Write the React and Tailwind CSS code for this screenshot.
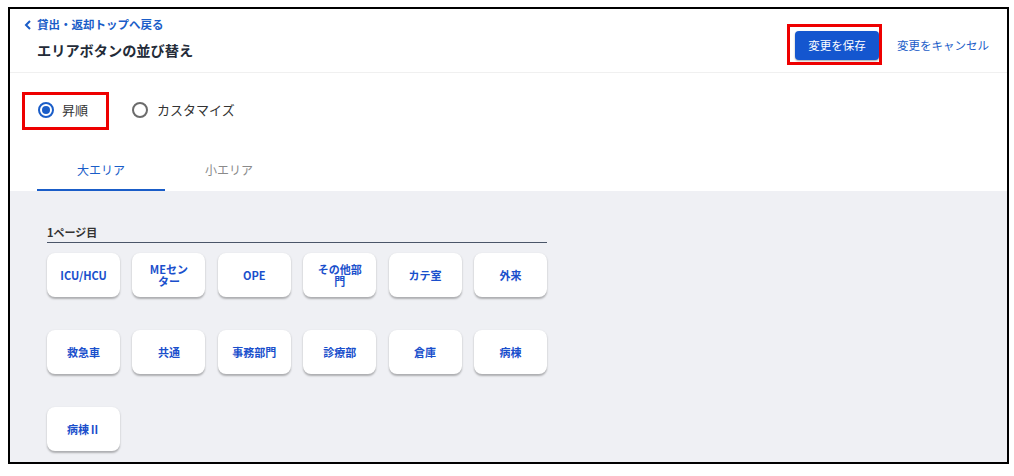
import React from "react";

const rows = [
  ["ICU/HCU", ["MEセン", "ター"], "OPE", ["その他部", "門"], "カテ室", "外来"],
  ["救急車", "共通", "事務部門", "診療部", "倉庫", "病棟"],
  ["病棟Ⅱ"],
];

function AreaButton({ label }) {
  return (
    <div className="h-[44px] w-[73px] rounded-[8px] bg-white shadow-[0_1.5px_2px_rgba(0,0,0,0.28)] flex items-center justify-center text-center text-[11px] font-bold leading-[12.5px] text-[#1a4fcc]">
      {Array.isArray(label) ? (
        <span>
          {label[0]}
          <br />
          {label[1]}
        </span>
      ) : (
        <span className="whitespace-nowrap">{label}</span>
      )}
    </div>
  );
}

export default function App() {
  const items = rows.flat();
  return (
    <div
      className="w-[1014px] h-[476px] bg-white pl-[8px] pt-[7px]"
      style={{ fontFamily: '"Noto Sans CJK JP", "Noto Sans", sans-serif' }}
    >
      <div className="w-[1001px] h-[457px] border-2 border-black flex flex-col overflow-hidden">
        {/* Header */}
        <div className="h-[64px] shrink-0 flex justify-between border-b border-[#f0f0f0]">
          <div className="pl-[14px] pt-[8px]">
            <div className="flex items-center h-[16px] text-[11.5px] font-bold text-[#1a5dc8]">
              <svg width="8" height="10" viewBox="0 0 8 10" className="mr-[5px]">
                <polyline points="6,1 2,5 6,9" fill="none" stroke="#1a5dc8" strokeWidth="2" />
              </svg>
              <span>貸出・返却トップへ戻る</span>
            </div>
            <div className="mt-[8px] ml-[13px] h-[20px] flex items-center text-[14.2px] font-bold text-[#232b38]">
              エリアボタンの並び替え
            </div>
          </div>
          <div className="flex items-start pt-[22px] pr-[18px]">
            <div className="relative">
              <button className="w-[84px] h-[29px] rounded-[4px] bg-[#1456cf] text-white text-[11.5px] shadow-[0_1px_2px_rgba(0,0,0,0.35)] flex items-center justify-center">
                変更を保存
              </button>
              <div className="absolute left-[-8px] top-[-7px] w-[95px] h-[41px] border-[3px] border-[#ee0000]" />
            </div>
            <div className="ml-[18px] h-[29px] flex items-center text-[11.5px] text-[#1a5dc8]">
              変更をキャンセル
            </div>
          </div>
        </div>

        {/* Radio row */}
        <div className="pl-[28px] pt-[27px] flex items-center">
          <div className="relative flex items-center h-[20px]">
            <span className="w-[16px] h-[16px] rounded-full border-2 border-[#1a5dc8] flex items-center justify-center">
              <span className="w-[8px] h-[8px] rounded-full bg-[#1a5dc8]" />
            </span>
            <span className="ml-[8px] text-[13px] text-[#333]">昇順</span>
            <div className="absolute left-[-16px] top-[-8px] w-[87px] h-[38px] border-[3px] border-[#ee0000]" />
          </div>
          <div className="ml-[44px] flex items-center h-[20px]">
            <span className="w-[16px] h-[16px] rounded-full border-2 border-[#6b6b6b]" />
            <span className="ml-[9px] text-[13px] text-[#333]">カスタマイズ</span>
          </div>
        </div>

        {/* Tabs */}
        <div className="pl-[27px] mt-[31px] flex">
          <div className="w-[128px] h-[40px] border-b-2 border-[#1a5dc8] flex items-center justify-center text-[12px] text-[#1a5dc8]">
            大エリア
          </div>
          <div className="w-[128px] h-[40px] border-b-2 border-transparent flex items-center justify-center text-[12px] text-[#8a8a8a]">
            小エリア
          </div>
        </div>

        {/* Gray area */}
        <div className="flex-1 bg-[#eff0f4] pl-[37px] pt-[33px]">
          <div className="w-[500px] pb-[2px] border-b border-[#4a5568] h-[19px] text-[11px] font-bold leading-[16px] text-[#333]">
            1ページ目
          </div>
          <div className="mt-[10px] grid grid-cols-[repeat(6,73px)] gap-x-[12.4px] gap-y-[33px]">
            {items.map((l, i) => (
              <AreaButton key={i} label={l} />
            ))}
          </div>
        </div>
      </div>
    </div>
  );
}
